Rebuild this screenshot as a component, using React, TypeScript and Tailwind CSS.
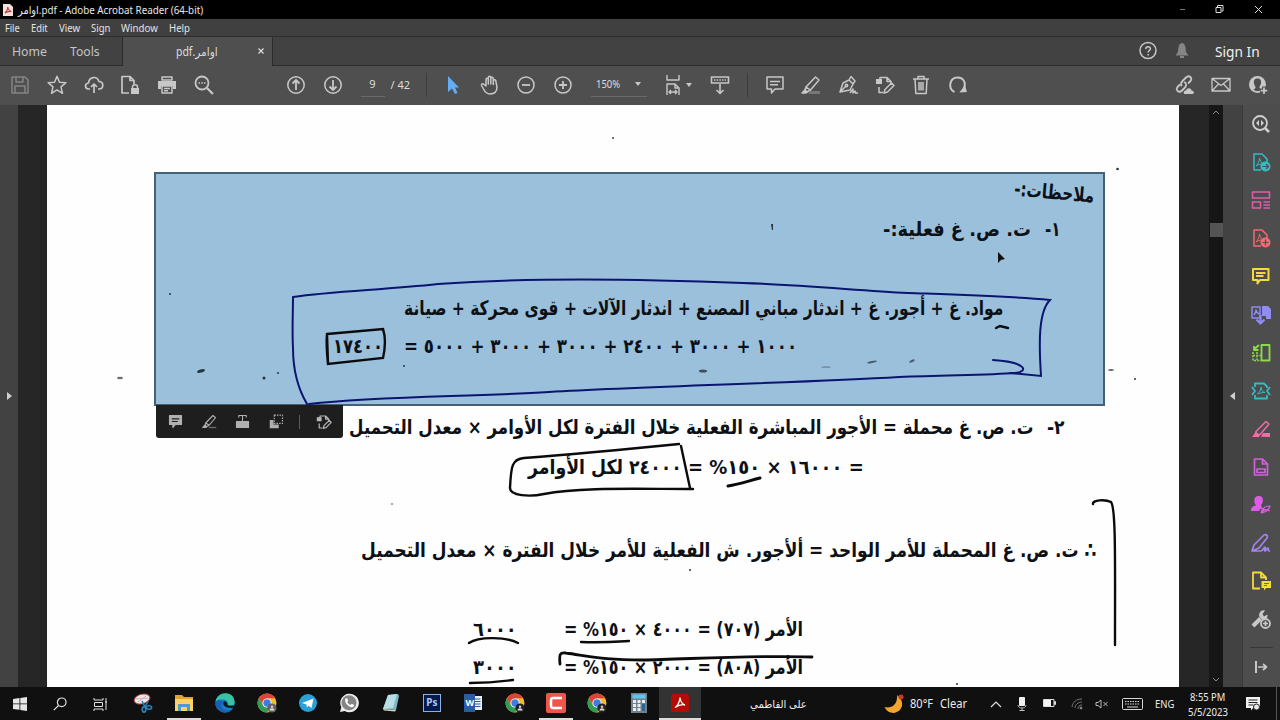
import { useLayoutEffect, useRef, useState } from 'react';
import type { ReactNode } from 'react';
import clsx from 'clsx';

// Squeezes or stretches one line of text to the width of its box.
function FitText({ children, className, rtl = false }: { children: ReactNode; className: string; rtl?: boolean }) {
  const outer = useRef<HTMLSpanElement>(null);
  const inner = useRef<HTMLSpanElement>(null);
  const [scale, setScale] = useState(1);

  useLayoutEffect(() => {
    if (!outer.current || !inner.current) return;
    const natural = inner.current.offsetWidth;
    if (natural > 0) setScale(outer.current.offsetWidth / natural);
  }, [children]);

  return (
    <span dir={rtl ? 'rtl' : 'ltr'} className={clsx('block shrink-0 whitespace-nowrap', className)}>
      <span
        ref={inner}
        className={clsx('inline-block', rtl ? 'origin-right' : 'origin-left')}
        style={{ transform: `scaleX(${scale})` }}
      >
        {children}
      </span>
      <span ref={outer} className="block h-0 w-full" />
    </span>
  );
}

function Icon({ children, className = 'text-[#c8c8c8]' }: { children: ReactNode; className?: string }) {
  return (
    <svg
      viewBox="0 0 20 20"
      className={clsx('size-5 shrink-0', className)}
      fill="none"
      stroke="currentColor"
      strokeWidth="1.5"
      strokeLinejoin="round"
      aria-hidden
    >
      {children}
    </svg>
  );
}

function ToolCell({ children }: { children: ReactNode }) {
  return <button className="flex h-full w-[36.7px] shrink-0 items-center justify-center">{children}</button>;
}

function TitleBar() {
  return (
    <header className="flex h-[19px] shrink-0 items-center bg-black text-[#e8e8e8]">
      <svg viewBox="0 0 10 12" className="ml-[3px] h-3 w-2.5" aria-hidden>
        <path d="M0 0h7l3 3v9H0z" fill="#f6dfdc" />
        <path d="M2 9c2-2 3-4 2.800-6 .3 2 1.500 4 3.700 4.500C6 7 4 7.500 2 9z" fill="none" stroke="#c23b33" strokeWidth="1.100" />
      </svg>
      <FitText className="ml-[5px] w-[185px] text-[11px] leading-4">
        <bdi>اوامر</bdi>.pdf - Adobe Acrobat Reader (64-bit)
      </FitText>
      <svg viewBox="0 0 100 19" className="ml-auto h-[19px] w-[100px]" fill="none" stroke="#ddd" aria-hidden>
        <path d="M-3 9.500h8" stroke="#777" />
        <path d="M36 7.500h5v5h-5zM37.500 7V5.500h5.500V11h-1.500" />
        <path d="M75 6l7 7M82 6l-7 7" />
      </svg>
    </header>
  );
}

function MenuBar() {
  return (
    <nav className="flex h-[18px] shrink-0 items-center gap-[11px] border-b border-[#2e2e2e] bg-[#404040] pl-[5px] text-[11px] leading-4 text-[#e4e4e4]">
      <FitText className="w-[15px]">File</FitText>
      <FitText className="w-[17px]">Edit</FitText>
      <FitText className="w-[21px]">View</FitText>
      <FitText className="w-[19px]">Sign</FitText>
      <FitText className="w-[37px]">Window</FitText>
      <FitText className="w-[21px]">Help</FitText>
    </nav>
  );
}

function TabBar() {
  return (
    <div className="flex h-[29px] shrink-0 bg-[#424242] text-[#c4c4c4]">
      <div className="flex w-[123px] items-center border-r border-b border-[#2c2c2c] pl-3 text-[13px] leading-5">
        <FitText className="w-[35px]">Home</FitText>
        <FitText className="ml-[23px] w-[30px]">Tools</FitText>
      </div>
      <div className="flex w-[149px] items-center bg-[#4f4f4f] pl-[53px] text-[#dcdcdc]">
        <FitText rtl className="w-[42px] text-[12px] leading-4">
          اوامر.pdf
        </FitText>
        <svg viewBox="0 0 6 6" className="mb-0.5 ml-[40px] size-1.5" stroke="#ddd" strokeWidth="1.200" aria-hidden>
          <path d="M.5.5l5 5M5.500.5l-5 5" />
        </svg>
      </div>
      <div className="flex flex-1 items-center border-b border-l border-[#2c2c2c] pl-[865px]">
        <Icon>
          <circle cx="10" cy="9.500" r="8" />
          <path d="M7.800 8c0-3 4.600-3 4.600-.3 0 1.800-2.300 1.800-2.300 3.800M10.100 13v1.500" />
        </Icon>
        <Icon className="ml-[14px] text-[#858585]">
          <path d="M10 2c-4 1-3.500 5-4 9l-2.500 3.500h13L14 11c-.5-4 0-8-4-9z" fill="currentColor" stroke="none" />
          <path d="M8 16h4" strokeWidth="2" />
        </Icon>
        <FitText className="mt-0.5 ml-[23px] w-[45px] text-[14px] leading-5 text-[#f0f0f0]">Sign In</FitText>
      </div>
    </div>
  );
}

const pencilSheet = (
  <>
    <path d="M5 9V2.500h7l4 4V9M12 2.500v4h4M4 12v5.500h4" />
    <path d="M1 4h6v5H1z" fill="currentColor" stroke="none" />
    <path d="M9 18l1-3.500L16.500 8l2.500 2.500-6.500 6.500z" />
  </>
);

const marker = (
  <>
    <path d="M5 12L14.500 2l3.500 3-8.500 10zM5 12l-1 3 2 2 3.500-2" />
    <path d="M1 18l3-3 2 2-1 1z" fill="currentColor" />
  </>
);

function Toolbar() {
  return (
    <div className="flex h-[39px] shrink-0 items-center bg-[#4f4f4f] pb-[2px] pl-[2px] text-[#dedede]">
      <ToolCell>
        <Icon className="text-[#858585]">
          <path d="M2 2h13l3 3v13H2zM6 2v5h7V2M5 18v-7h10v7" />
        </Icon>
      </ToolCell>
      <ToolCell>
        <Icon>
          <path d="M10 1.200l2.500 6 6.400.5-4.900 4.200 1.500 6.400-5.500-3.400-5.500 3.400L6 11.900 1.100 7.700l6.400-.5z" />
        </Icon>
      </ToolCell>
      <ToolCell>
        <Icon>
          <path d="M6 14H4.500C.5 13.500.5 8.500 4.500 8 5 1.500 13 .5 15 6.500c5 0 5 7.500 0 7.500h-1M10 18V9M7 12l3-3 3 3" strokeWidth="1.700" />
        </Icon>
      </ToolCell>
      <ToolCell>
        <Icon>
          <path d="M9 18H2V1.500h8l4 4V9M10 1.500v4h4" strokeWidth="1.700" />
          <path d="M11 13h8v6h-8z" fill="currentColor" stroke="none" />
          <path d="M12.500 13v-1c0-3 5-3 5 0v1" />
        </Icon>
      </ToolCell>
      <ToolCell>
        <Icon>
          <path d="M5 2h10v3H5z" />
          <path d="M1 6h18v8h-3v-3H4v3H1z" fill="currentColor" stroke="none" />
          <path d="M5 11h10v7H5zM7 13.500h6M7 15.800h4" />
        </Icon>
      </ToolCell>
      <ToolCell>
        <Icon>
          <circle cx="8" cy="8" r="6.500" strokeWidth="1.800" />
          <path d="M13 13l6 6" strokeWidth="2.200" />
          <path d="M4.500 8H6M7.300 8h1.500M10 8h1.500" />
        </Icon>
      </ToolCell>
      <div className="ml-[56px] flex">
        <ToolCell>
          <Icon>
            <circle cx="10" cy="10" r="8.200" />
            <path d="M10 15V5M6.500 8.500L10 5l3.500 3.500" strokeWidth="1.800" />
          </Icon>
        </ToolCell>
        <ToolCell>
          <Icon>
            <circle cx="10" cy="10" r="8.200" />
            <path d="M10 5v10M6.500 11.500L10 15l3.500-3.500" strokeWidth="1.800" />
          </Icon>
        </ToolCell>
      </div>
      <span className="ml-[9px] flex h-6 w-6 items-center justify-center border-b border-[#6a6a6a] text-[11px]">9</span>
      <FitText className="ml-[6px] w-[20px] text-[11px] leading-4">/ 42</FitText>
      <span className="ml-[15px] h-6 w-px bg-[#3c3c3c]" />
      <div className="ml-[8px] flex">
        <ToolCell>
          <Icon className="text-[#62adf5]">
            <path d="M5 1v16l4-3.500L12 19l2.500-1-2.500-5.500h4z" fill="currentColor" stroke="none" />
          </Icon>
        </ToolCell>
        <ToolCell>
          <Icon>
            <path d="M6 11V4.500c0-1.800 2.300-1.800 2.300 0V9 2.500c0-1.800 2.500-1.800 2.500 0V9 3.500c0-1.800 2.500-1.800 2.500 0V9.500 6c0-1.800 2.500-1.800 2.500 0L17 12c0 5-3 7-7 7-3.500 0-5-2-6.500-5L1.500 10.500C1 9 2.800 8 4 9.500z" />
          </Icon>
        </ToolCell>
        <ToolCell>
          <Icon>
            <circle cx="10" cy="10" r="8" />
            <path d="M6 10h8" strokeWidth="1.800" />
          </Icon>
        </ToolCell>
        <ToolCell>
          <Icon>
            <circle cx="10" cy="10" r="8" />
            <path d="M6 10h8M10 6v8" strokeWidth="1.800" />
          </Icon>
        </ToolCell>
      </div>
      <div className="ml-[10px] flex h-6 w-[56px] items-center border-b border-[#6a6a6a] pl-[5px]">
        <FitText className="w-[24px] text-[11px] leading-4">150%</FitText>
        <span className="ml-[15px] border-x-[3px] border-t-4 border-x-transparent border-t-[#c8c8c8]" />
      </div>
      <Icon className="ml-[16px] text-[#c8c8c8]">
        <path d="M4 0v5h12V0M4 20V9h8l4 4v7M12 9v4h4M6 17h8M8 15l-2 2 2 2M12 15l2 2-2 2" strokeWidth="1.400" />
      </Icon>
      <span className="ml-[3px] border-x-[3px] border-t-4 border-x-transparent border-t-[#c8c8c8]" />
      <Icon className="ml-[18px] text-[#c8c8c8]">
        <path d="M1.500 2h17v6h-17zM10 9v9M6.500 15l3.500 3.500 3.500-3.500" strokeWidth="1.600" />
        <path d="M4 5h12" strokeDasharray="1.500 1.200" />
      </Icon>
      <span className="ml-[17px] h-6 w-px bg-[#3c3c3c]" />
      <div className="ml-[8px] flex">
        <ToolCell>
          <Icon>
            <path d="M2 2h16v12h-8l-3.500 4v-4H2zM5 6.500h10M5 9.800h8" />
          </Icon>
        </ToolCell>
        <ToolCell>
          <Icon>
            {marker}
            <path d="M8 17.500h11" stroke="#777" strokeWidth="3" />
          </Icon>
        </ToolCell>
        <ToolCell>
          <Icon>
            <path d="M2 17l3-9 6-3 4 4-3 6zM2 17l6-6M11 5l2-3.500L17 6l-2 3M12 18l3-4v4l2-2 .5 2H20" />
            <circle cx="8.500" cy="10.500" r="1.200" />
          </Icon>
        </ToolCell>
        <ToolCell>
          <Icon>{pencilSheet}</Icon>
        </ToolCell>
        <ToolCell>
          <Icon>
            <path d="M2 4h16M7 4V1.500h6V4M4 4l.8 14.500h10.400L16 4M8 7v8.500M10 7v8.500M12 7v8.500" />
          </Icon>
        </ToolCell>
        <ToolCell>
          <Icon>
            <path d="M6.500 17C-.5 13.500 1.500 2.500 9.500 2.500c6.500 0 9 6 6 11.500" strokeWidth="2" />
            <path d="M11.500 17.500l1-1.500 4.500-5.500 2 6.500z" fill="currentColor" stroke="none" />
          </Icon>
        </ToolCell>
      </div>
      <div className="mr-[4px] ml-auto flex">
        <ToolCell>
          <Icon>
            <path d="M8 11c-2-2-.5-4 1-5.500l3-3c3-3 7 .5 4.500 3.500L14 8.500M10 7c3 1 2.500 4 .5 6L8 15.500c-3 3-7-.5-4.500-3.500L6 9.500" strokeWidth="1.800" />
            <path d="M10 19c-1-3 1-3.500 2-3.500 1-3 5-3 5.500 0 3 0 3 3.500 1 3.500z" fill="currentColor" stroke="none" />
          </Icon>
        </ToolCell>
        <ToolCell>
          <Icon>
            <path d="M1 3.500h18v12.500H1zM1 3.500l9 7 9-7M1 16l6.500-7M19 16l-6.500-7" strokeWidth="1.300" />
          </Icon>
        </ToolCell>
        <ToolCell>
          <Icon>
            <circle cx="9.500" cy="9.500" r="8.500" fill="currentColor" stroke="none" />
            <path d="M9.500 3.500c-3 0-4 2-3.500 5 .3 2 1.500 2.500 1.500 4 0 1-1 1.500-2 2 2 2 6 2 8 0-1-.5-2-1-2-2 0-1.500 1.200-2 1.500-4 .5-3-.5-5-3.500-5z" fill="#4f4f4f" stroke="none" />
            <path d="M16 11.500v8M12 15.500h8" stroke="#4f4f4f" strokeWidth="4" />
            <path d="M16 12.500v6.500M12.800 15.700h6.500" strokeWidth="1.700" />
          </Icon>
        </ToolCell>
      </div>
    </div>
  );
}

// Lines of the scanned page.
function Line({ children, className }: { children: ReactNode; className: string }) {
  return (
    <div dir="rtl" className={clsx('flex items-center text-[20px] leading-6 text-[#0d1116]', className)}>
      {children}
    </div>
  );
}

function ScannedPage() {
  return (
    <main className="relative h-full w-[1132px] overflow-hidden bg-[#fefefe] pt-[67px] font-['DejaVu_Sans',sans-serif] font-bold">
      <section className="ml-[107px] h-[234px] w-[951px] border-2 border-[#466077] bg-[#9bc0dc]">
        <Line className="h-[35px] pr-[9px]">
          <FitText rtl className="w-[80px] rotate-[5deg]">ملاحظات:-</FitText>
        </Line>
        <Line className="h-[40px] pr-[42px]">
          <FitText rtl className="w-[16px]">١-</FitText>
          <FitText rtl className="mr-[14px] w-[148px]">ت. ص. غ فعلية:-</FitText>
        </Line>
        <Line className="mt-[40px] h-[38px] pr-[100px]">
          <FitText rtl className="w-[599px]">
            مواد. غ + أجور. غ + اندثار مباني المصنع + اندثار الآلات + قوى محركة + صيانة
          </FitText>
        </Line>
        <Line className="h-[38px] pr-[306px]">
          <FitText rtl className="w-[393px]">١٠٠٠ + ٣٠٠٠ + ٢٤٠٠ + ٣٠٠٠ + ٣٠٠٠ + ٥٠٠٠ =</FitText>
          <FitText rtl className="mr-[21px] w-[50px]">١٧٤٠٠</FitText>
        </Line>
      </section>
      <Line className="mt-px h-[40px] pr-[114px]">
        <FitText rtl className="w-[18px]">٢-</FitText>
        <FitText rtl className="mr-[14px] w-[684px]">
          ت. ص. غ محملة = الأجور المباشرة الفعلية خلال الفترة لكل الأوامر × معدل التحميل
        </FitText>
      </Line>
      <Line className="h-[40px] pr-[315px]">
        <FitText rtl className="w-[176px]">= ١٦٠٠٠ × ١٥٠% =</FitText>
        <FitText rtl className="mr-[6px] w-[154px]">٢٤٠٠٠ لكل الأوامر</FitText>
      </Line>
      <Line className="mt-[43px] h-[40px] pr-[83px]">
        <FitText rtl className="w-[735px]">
          ∴ ت. ص. غ المحملة للأمر الواحد = ألأجور. ش الفعلية للأمر خلال الفترة × معدل التحميل
        </FitText>
      </Line>
      <Line className="mt-[40px] h-[38px] pr-[376px]">
        <FitText rtl className="w-[239px]">الأمر (٧٠٧) = ٤٠٠٠ × ١٥٠% =</FitText>
        <FitText rtl className="mr-[47px] w-[44px]">٦٠٠٠</FitText>
      </Line>
      <Line className="h-[38px] pr-[376px]">
        <FitText rtl className="w-[239px]">الأمر (٨٠٨) = ٢٠٠٠ × ١٥٠% =</FitText>
        <FitText rtl className="mr-[47px] w-[44px]">٣٠٠٠</FitText>
      </Line>

      {/* pen strokes and scan specks */}
      <svg viewBox="47 105 1132 582" className="absolute inset-0 h-[582px] w-[1132px]" fill="none" strokeLinecap="round" aria-hidden>
        <g stroke="#0c1470" strokeWidth="2">
          <path d="M307 404c-10-17-14-34-14-56-1-18 0-36 0-51 40-6 90-7 145-13 110-8 230-4 305-1 60 2 110 7 165 10 60 2 100 3 142 7-12 12-11 45-9 76l-31-3" />
          <path d="M309 404c70-8 160-7 240-12 100-6 250-9 350-15 50-2 90-2 116-4 14-1 12-11-22-13" />
        </g>
        <g stroke="#0b0b0d" strokeWidth="2.400">
          <path d="M327 334l56-5c3 9 2 20 0 29l-55 6zM327 334c-1 10 0 20 1 30" />
          <path d="M996 328l4-2 8 2" />
          <path d="M679 444c-40 4-90 9-155 14-12 1-13 8-14 30 0 8 20 9 34 6 35-7 90-5 149-5M681 446c3 14 6 28 9 42" />
          <path d="M728 486c12-2 20-5 32-8" strokeWidth="3" />
          <path d="M1093 504c-1-4 12-5 18-2 5 6 4 60 4 143" />
          <path d="M581 642c20 1 32 0 48-1M469 643c10-7 38-6 49 0M470 683c20 0 28-1 43-3" />
          <path d="M560 664c-1-10 0-12 6-11 28 4 40 7 76 7 50-1 110-5 170-3" strokeWidth="2.800" />
        </g>
        <g fill="#27323c">
          <ellipse cx="201" cy="371" rx="4" ry="1.500" transform="rotate(-15 201 371)" />
          <ellipse cx="120" cy="378" rx="3" ry="1.200" opacity=".7" />
          <ellipse cx="703" cy="371" rx="4" ry="1.500" opacity=".8" />
          <ellipse cx="872" cy="362" rx="5" ry="1" transform="rotate(-12 872 362)" opacity=".7" />
          <ellipse cx="912" cy="361" rx="3" ry="1.200" transform="rotate(-25 912 361)" opacity=".7" />
          <ellipse cx="826" cy="367" rx="5" ry=".6" opacity=".6" />
          <ellipse cx="1111" cy="370" rx="3" ry=".7" />
          <path d="M771 224h2v6h-1z" />
          <circle cx="1117.500" cy="169" r="1.300" />
          <circle cx="170" cy="294" r="1" />
          <circle cx="264" cy="378" r="1.500" />
          <circle cx="278" cy="373" r="1" />
          <circle cx="404" cy="366" r="1" />
          <circle cx="613" cy="138" r=".9" />
          <circle cx="392" cy="504" r=".8" />
          <circle cx="690" cy="570" r="1" />
          <circle cx="1135" cy="379" r="1" />
          <circle cx="957" cy="684" r="1" />
        </g>
        <path d="M998 252v11l3-3 4-1z" fill="#111" />
      </svg>

      {/* selection toolbar */}
      <div className="absolute top-[300px] left-[109px] flex h-[33px] w-[187px] items-center rounded-b-[3px] bg-[#1e1e1e] pl-[12px]">
        <Icon className="size-[15px]! text-[#b0b0b0]">
          <path d="M2 2h16v12H10l-3.500 4v-4H2z" fill="currentColor" />
          <path d="M5 6.500h10M5 10h8" stroke="#1e1e1e" />
        </Icon>
        <Icon className="ml-[19px] size-[15px]! text-[#b0b0b0]">
          {marker}
          <path d="M9 18h10" stroke="#666" strokeWidth="2" />
        </Icon>
        <Icon className="ml-[18px] size-[15px]! text-[#b0b0b0]">
          <path d="M2 10h16v8H2z" fill="currentColor" />
          <path d="M5 4.500V2h10v2.500M10 2v8" />
        </Icon>
        <Icon className="ml-[19px] size-[15px]! text-[#b0b0b0]">
          <path d="M1 8h5v6h7v5H1z" fill="currentColor" stroke="none" />
          <path d="M7 1.500h11v11H7z" strokeDasharray="2 1.500" />
        </Icon>
        <span className="ml-[15px] h-[14px] w-px bg-[#5a5a5a]" />
        <Icon className="ml-4 size-4! text-[#b8b8b8]">{pencilSheet}</Icon>
      </div>
    </main>
  );
}

const pdfSheet = (
  <>
    <path d="M10 18H3V2h8l5 5v3" />
    <path d="M5 14c2-2 3.500-5 3.500-8 .3 3 2 5 4.500 6-3-.5-5.500.5-8 2z" strokeWidth="1" />
  </>
);

const SIDE_TOOLS: { name: string; color: string; icon: ReactNode }[] = [
  {
    name: 'search',
    color: 'text-[#d0d0d0]',
    icon: (
      <>
        <circle cx="9" cy="9" r="7" strokeWidth="1.800" />
        <path d="M14 14l4 4" strokeWidth="2.500" />
        <path d="M8 6v6L5 9zM10 6v6l3-3z" fill="currentColor" stroke="none" />
      </>
    ),
  },
  {
    name: 'export',
    color: 'text-[#35bcc6]',
    icon: (
      <>
        {pdfSheet}
        <circle cx="14.500" cy="14.500" r="5" fill="currentColor" stroke="none" />
        <path d="M11.500 14.500H17M15 12l2.500 2.500L15 17" stroke="#4d4d4d" strokeWidth="1.200" />
      </>
    ),
  },
  {
    name: 'organize',
    color: 'text-[#dd5fac]',
    icon: <path d="M1.500 2h17v6h-17zM1.500 12h8v6h-8zM12.500 12H19M12.500 15H19M12.500 18H19" />,
  },
  {
    name: 'create',
    color: 'text-[#f56a73]',
    icon: (
      <>
        {pdfSheet}
        <circle cx="14.500" cy="14.500" r="5" fill="currentColor" stroke="none" />
        <path d="M11.500 14.500h6M14.500 11.500v6" stroke="#4d4d4d" strokeWidth="1.200" />
      </>
    ),
  },
  {
    name: 'comment',
    color: 'text-[#f2dc3c]',
    icon: <path d="M2 3h15.500v11H9l-2.500 3.500V14H2zM5 7h9.500M5 10h7.500" strokeWidth="2" />,
  },
  {
    name: 'combine',
    color: 'text-[#8f8cf2]',
    icon: (
      <>
        <path d="M1 2h8v11H1zM3 10c1.500-1.500 2-3 2-5 .5 2 1 3 3 4" />
        <path d="M11 1h6l3 3v10h-5v-3h-4z" fill="currentColor" stroke="none" />
        <path d="M9.500 10v8M5.500 14.500l4 4 4-4" strokeWidth="2.200" />
      </>
    ),
  },
  {
    name: 'compare',
    color: 'text-[#8ddb4b]',
    icon: (
      <>
        <path d="M10.500 2h8v15.500h-8z" strokeWidth="1.800" />
        <path d="M2 9v8.500h8M2 12.500h8M6 9v8" strokeDasharray="2 1.200" />
        <path d="M8 2L3 6.500M3 3v4h4.500" strokeWidth="1.800" />
      </>
    ),
  },
  {
    name: 'compress',
    color: 'text-[#35bcc6]',
    icon: (
      <>
        <path d="M4 6V2.500h9l3 3V7M4 14v3.500h12V14M1 6l3 4-3 4M19 6l-3 4 3 4" strokeWidth="1.800" />
        <path d="M6.500 13C8.500 11 10 9 10 6c0 3 1.500 5 4 5.500-2.500 0-5 .5-7.500 1.500z" strokeWidth="1" />
      </>
    ),
  },
  {
    name: 'redact',
    color: 'text-[#ee6fa6]',
    icon: (
      <>
        <path d="M5 12.500L15 2.500 18 5l-9 10.500-5 1z" />
        <path d="M1 18l4-5 4 2.500L8 18zM10 17.800l2-3.800h7v4z" fill="currentColor" stroke="none" />
      </>
    ),
  },
  {
    name: 'prepare form',
    color: 'text-[#cf62da]',
    icon: <path d="M3.500 2h8l5 5v11h-13zM11.500 2v5h5M6 12h8v3.500H6z" strokeWidth="1.700" />,
  },
  {
    name: 'request signatures',
    color: 'text-[#dc5ce8]',
    icon: (
      <>
        <path d="M7 1c6-1 6 6 3 9l1 2-3 4H0c0-4 2-5 5-5.500C2 6 3 1.500 7 1z" fill="currentColor" stroke="none" />
        <path d="M10 18c1-5 4-7 9-7-1 4-4 6-9 7zM9 13l10 3M10 18l4-4" strokeWidth="1.200" />
      </>
    ),
  },
  {
    name: 'fill and sign',
    color: 'text-[#a285e8]',
    icon: <path d="M1 18l2-6 10-10c3-1 4 1 3 3L8 15l-7 3h9c2 0 3-4 4-4s-1 4 0 4 2-3 3-3-1 3 2 3" strokeWidth="1.700" />,
  },
  {
    name: 'review',
    color: 'text-[#f2dc3c]',
    icon: (
      <>
        <path d="M9 17.500H2V1.500h8l5 5V9M10 1.500v5h5" strokeWidth="1.800" />
        <path d="M10.500 10H20v7h-5l-2 2.500V17h-2.500z" fill="currentColor" stroke="none" />
        <path d="M13 12.500h5M13 14.500h3" stroke="#776f2a" strokeWidth="1" />
      </>
    ),
  },
  {
    name: 'more tools',
    color: 'text-[#c8c8c8]',
    icon: (
      <>
        <path d="M2 17L9.500 9.500" strokeWidth="4" />
        <path d="M14 1.500c-4-1-7 3-5.500 6.500L11 10.500c4 1 6-2 5.500-5L13 7.500 11.500 5z" fill="currentColor" stroke="none" />
        <circle cx="14.500" cy="14.500" r="4.500" fill="#4d4d4d" strokeWidth="1.800" />
        <path d="M12 14.500h5M14.500 12v5" strokeWidth="1.700" />
      </>
    ),
  },
];

function Sidebar() {
  return (
    <aside className="flex w-[38px] flex-col items-center border-l border-[#3a3a3a] bg-[#4d4d4d] pr-px">
      {SIDE_TOOLS.map((tool) => (
        <div key={tool.name} className="flex h-[38.1px] w-full items-center justify-center">
          <Icon className={tool.color}>{tool.icon}</Icon>
        </div>
      ))}
      <span className="mt-[9px] h-px w-[23px] bg-[#383838]" />
      <Icon className="mt-[9px] text-[#c8c8c8]">
        <path d="M5 4v12" strokeWidth="2" />
        <path d="M7 10h8M12 7l3.500 3-3.500 3" strokeWidth="1.700" />
      </Icon>
    </aside>
  );
}

function Workspace() {
  return (
    <div className="flex h-[582px] shrink-0 bg-[#262626]">
      <div className="flex w-[18px] items-center justify-center bg-[#424242]">
        <span className="border-y-4 border-l-[5px] border-y-transparent border-l-[#cfcfcf]" />
      </div>
      <div className="w-[29px]" />
      <ScannedPage />
      <div className="w-[30px]" />
      <div className="flex w-[14px] flex-col items-center bg-[#161616] py-1">
        <svg viewBox="0 0 8 6" className="h-1.5 w-2" fill="none" stroke="#888" aria-hidden>
          <path d="M1 5l3-3 3 3" />
        </svg>
        <span className="mt-[108px] h-[14px] w-[13px] bg-[#545454]" />
        <svg viewBox="0 0 8 6" className="mt-auto h-1.5 w-2" fill="none" stroke="#888" aria-hidden>
          <path d="M1 1l3 3 3-3" />
        </svg>
      </div>
      <div className="flex w-[19px] items-center justify-center bg-[#424242]">
        <span className="border-y-4 border-r-[5px] border-y-transparent border-r-[#cfcfcf]" />
      </div>
      <Sidebar />
    </div>
  );
}

function ChromeLogo({ badge }: { badge: string }) {
  return (
    <svg viewBox="0 0 20 20" className="size-5" aria-hidden>
      <circle cx="10" cy="10" r="9.500" fill="#f3be2c" />
      <path d="M1.800 5.200a9.500 9.500 0 0 1 16.400 0H10L6 12z" fill="#dc4437" />
      <path d="M1.800 5.200A9.500 9.500 0 0 0 10 19.500l4-7-8 0z" fill="#2f9c57" />
      <circle cx="10" cy="10" r="4.600" fill="#fff" />
      <circle cx="10" cy="10" r="3.700" fill="#3d7de0" />
      <circle cx="15" cy="15" r="4.600" fill={badge} />
      <path d="M12.500 17.500c0-3 5-3 5 0z" fill="#ddd" />
      <circle cx="15" cy="13.800" r="1.200" fill="#e4c9b4" />
    </svg>
  );
}

function TaskCell({ children, open = false, active = false }: { children: ReactNode; open?: boolean; active?: boolean }) {
  return (
    <div className={clsx('flex h-full w-[41.33px] shrink-0 flex-col items-center', active && 'bg-[#333333]')}>
      <div className="flex flex-1 items-center">{children}</div>
      <span className={clsx('h-0.5 shrink-0', active ? 'w-full bg-[#e0dcda]' : 'w-[34px]', open && 'bg-[#e0dcda]')} />
    </div>
  );
}

function Taskbar() {
  return (
    <footer className="flex h-[33px] shrink-0 items-center bg-[#101010] text-[#ececec]">
      <div className="flex w-10 justify-center">
        <svg viewBox="0 0 14 14" className="size-[14px]" fill="#e6e6e6" aria-hidden>
          <path d="M0 2l6.500-1v5.500H0zM7.300.9L14 0v6.500H7.300zM0 7.300h6.500v5.500L0 12zM7.300 7.300H14V14l-6.700-1z" />
        </svg>
      </div>
      <div className="flex w-10 justify-center">
        <svg viewBox="0 0 14 14" className="size-[14px]" fill="none" stroke="#e0e0e0" strokeWidth="1.200" aria-hidden>
          <circle cx="8.700" cy="5.300" r="4.300" />
          <path d="M5.500 8.500L.8 13.200" />
        </svg>
      </div>
      <div className="mr-[2px] flex w-10 justify-center">
        <svg viewBox="0 0 15 14" className="h-[14px] w-[15px]" fill="none" stroke="#e0e0e0" aria-hidden>
          <path d="M1 1v2h9V1M1.500 5.500h8v4h-8zM1 14v-2h9v2M13 1v12M12 5h2" />
        </svg>
      </div>
      <TaskCell>
        <svg viewBox="0 0 20 20" className="size-5" aria-hidden>
          <ellipse cx="9" cy="6" rx="8" ry="4.800" transform="rotate(-15 9 6)" fill="#efe7e7" stroke="#b33d45" />
          <path d="M3 6l12-1M5 9l8-6" stroke="#b9a8aa" strokeWidth=".8" />
          <g fill="none" stroke="#2b83b8" strokeWidth="1.600">
            <path d="M9 8l3 6M15 8l-3 6" />
            <ellipse cx="11" cy="16.500" rx="1.800" ry="2.600" />
            <ellipse cx="16" cy="14.500" rx="2.600" ry="1.700" />
          </g>
        </svg>
      </TaskCell>
      <TaskCell open>
        <svg viewBox="0 0 20 20" className="size-5" aria-hidden>
          <path d="M1 2h7l2 2h9v14H1z" fill="#dfa52e" />
          <path d="M1 6h18v12H1z" fill="#fad267" />
          <path d="M4 18v-7h12v7h-3v-4H7v4z" fill="#4a9bd0" />
        </svg>
      </TaskCell>
      <TaskCell>
        <svg viewBox="0 0 20 20" className="size-5" aria-hidden>
          <circle cx="10" cy="10" r="9.700" fill="#147dcc" />
          <path d="M.4 9C2-2 19-3 19.600 9c.2 4-4 5-7 3.500 2-3-1-6-4.500-6C4 6.500 1.500 7 .4 9z" fill="#38c4a2" />
          <path d="M8 9c-4 5 1 11 9 7.500C10 23-1 17 .5 9.500 3 6 6 6.500 8 9z" fill="#1b5fb4" />
          <path d="M9 8c-2 3 0 7 7 7h3c2-4-2-2-5-2.500-3-.5 0-3-5-4.500z" fill="#101820" />
        </svg>
      </TaskCell>
      <TaskCell>
        <ChromeLogo badge="#655f60" />
      </TaskCell>
      <TaskCell>
        <svg viewBox="0 0 20 20" className="size-5" aria-hidden>
          <circle cx="10" cy="10" r="9" fill="#2a9fd8" />
          <path d="M4 10l11.500-4.500L13.500 15l-3-2.200L8.800 14.500 8.500 11.500z" fill="#fff" />
        </svg>
      </TaskCell>
      <TaskCell>
        <svg viewBox="0 0 20 20" className="size-5" aria-hidden>
          <path d="M1 19l1.300-4.700A9.300 9.300 0 1 1 5.800 18z" fill="#ededed" />
          <circle cx="10" cy="9.800" r="7.500" fill="#858585" />
          <path d="M6.500 5.500l1.700-.2 1 2.700-1 1c1 2 2 2.500 3.300 3l1.200-1.200 2.500 1.200c0 2-2 2.500-3.500 2C8.500 13 5 9 6.500 5.500z" fill="#fff" />
        </svg>
      </TaskCell>
      <TaskCell>
        <svg viewBox="0 0 20 20" className="size-5" aria-hidden>
          <path d="M7 2l10-1 1 2-3 14-13-1z" fill="#7fb6c4" />
          <path d="M7 2l9-1-4 14-10 1z" fill="#b9dfe6" />
          <path d="M2 16l13 1-1 1.500-11-1z" fill="#d7d0ae" />
        </svg>
      </TaskCell>
      <TaskCell>
        <div className="flex h-[18px] w-[18px] items-center justify-center border border-[#8ab2e8] bg-[#041a4e] text-[10px] font-bold text-[#a9cbf5]">
          Ps
        </div>
      </TaskCell>
      <TaskCell>
        <div className="flex items-center">
          <div className="flex h-[18px] w-[11px] items-center justify-center bg-[#2a5ca8] text-[9px] font-bold text-white">W</div>
          <svg viewBox="0 0 7 14" className="h-[14px] w-[7px]" aria-hidden>
            <path d="M0 0h7v14H0z" fill="#edf2fa" />
            <path d="M0 3h5.500M0 5.500h5.500M0 8h5.500M0 10.500h5.500" stroke="#2a5ca8" />
          </svg>
        </div>
      </TaskCell>
      <TaskCell>
        <ChromeLogo badge="#17202a" />
      </TaskCell>
      <TaskCell open>
        <svg viewBox="0 0 20 20" className="size-5" aria-hidden>
          <rect width="20" height="20" rx="2" fill="#f0554a" />
          <path d="M16 5H7.500C5 5 5 6 5 8v4c0 2 0 3 2.500 3H16" fill="none" stroke="#fff" strokeWidth="2.600" />
        </svg>
      </TaskCell>
      <TaskCell>
        <ChromeLogo badge="#2a2220" />
      </TaskCell>
      <TaskCell>
        <svg viewBox="0 0 16 20" className="h-5 w-4" aria-hidden>
          <path d="M0 0h16v20H0z" fill="#71808c" />
          <path d="M1.500 1.500h13v4h-13z" fill="#62c5ec" />
          <path d="M2 7h3v3H2zM6.500 7h3v3h-3zM11 7h3v3h-3zM2 11h3v3H2zM6.500 11h3v3h-3zM2 15h3v3H2zM6.500 15h3v3h-3z" fill="#e8edf0" />
          <path d="M11 11h3v7h-3z" fill="#32648c" />
        </svg>
      </TaskCell>
      <TaskCell active>
        <svg viewBox="0 0 18 18" className="size-[18px]" aria-hidden>
          <rect width="18" height="18" rx="2.500" fill="#b50d05" />
          <path d="M4 13.500c2-1 5-5.500 5-10 .4 4.500 2.500 6.500 5 7.500-3-.8-7 .5-10 2.500z" fill="none" stroke="#fff" strokeWidth="1.300" />
        </svg>
      </TaskCell>
      <FitText rtl className="ml-[49px] w-[57px] text-[11px] leading-4">على الفاطمي</FitText>
      <svg viewBox="0 0 20 20" className="ml-[77px] size-5" aria-hidden>
        <path d="M13 1c9 7 5 17-3 18-5 0-8-3-9.500-6C7 15 14 11 13 1z" fill="#f5a52d" />
        <circle cx="17" cy="3" r="2.500" fill="#c93a2d" />
      </svg>
      <FitText className="ml-[6px] w-[23px] text-[12px] leading-4">80°F</FitText>
      <FitText className="ml-[7px] w-[27px] text-[12px] leading-4">Clear</FitText>
      <svg viewBox="0 0 12 8" className="ml-[23px] h-2 w-3" fill="none" stroke="#e0e0e0" strokeWidth="1.200" aria-hidden>
        <path d="M1 7l5-5 5 5" />
      </svg>
      <svg viewBox="0 0 10 14" className="ml-[15px] h-[14px] w-2.5" aria-hidden>
        <rect x="2" width="6" height="9" rx="1" fill="#f0f0f0" />
        <path d="M1 8c0 4 8 4 8 0M5 11v3M2.500 13.500h5" fill="none" stroke="#c0c0c0" />
      </svg>
      <svg viewBox="0 0 13 9" className="ml-[16px] h-[9px] w-[13px]" aria-hidden>
        <path d="M.5.5h10.500v7H.5zM11.500 2.500h1v3h-1z" fill="none" stroke="#ddd" />
        <path d="M1 1h7v6H1z" fill="#f4f4f4" />
      </svg>
      <svg viewBox="0 0 12 12" className="ml-[15px] size-3" fill="none" stroke="#777" aria-hidden>
        <path d="M1 9C2 4 5 1 11 1M4 10c0-3 3-6 7-6M7 11c0-2 1-4 4-4" />
        <circle cx="10" cy="10" r="1" fill="#ddd" />
      </svg>
      <svg viewBox="0 0 14 10" className="ml-[12px] h-2.5 w-[14px]" fill="none" stroke="#bbb" aria-hidden>
        <path d="M1 3.500h2L6 1v8L3 6.500H1zM8.500 3l4 4M12.500 3l-4 4" />
      </svg>
      <svg viewBox="0 0 21 12" className="ml-[13px] h-3 w-[21px]" fill="none" stroke="#d8d8d8" aria-hidden>
        <rect x=".5" y=".5" width="20" height="11" rx="1" />
        <path d="M3 3.500h15M3 6h15" strokeDasharray="1.500 1" />
        <path d="M5 9h11" />
      </svg>
      <FitText className="ml-[12px] w-[19px] text-[11px] leading-4">ENG</FitText>
      <div className="ml-[14px] flex w-[40px] flex-col items-center text-[11px] leading-[15px]">
        <FitText className="w-[35px]">8:55 PM</FitText>
        <FitText className="w-[40px]">5/5/2023</FitText>
      </div>
      <svg viewBox="0 0 14 14" className="ml-[18px] size-[14px]" aria-hidden>
        <path d="M0 0h14v11H7l-2 2.500V11H0z" fill="#f2f2f2" />
        <path d="M2.500 3h9M2.500 5.500h9M2.500 8h5" stroke="#222" />
        <circle cx="10.500" cy="10" r="3" fill="#e8e8e8" stroke="#222" />
      </svg>
      <span className="ml-auto h-full w-[4px] border-l border-[#555]" />
    </footer>
  );
}

export default function App() {
  return (
    <div className="flex h-[720px] w-[1280px] flex-col overflow-hidden bg-[#4f4f4f] font-['Noto_Sans','DejaVu_Sans',sans-serif]">
      <TitleBar />
      <MenuBar />
      <TabBar />
      <Toolbar />
      <Workspace />
      <Taskbar />
    </div>
  );
}
